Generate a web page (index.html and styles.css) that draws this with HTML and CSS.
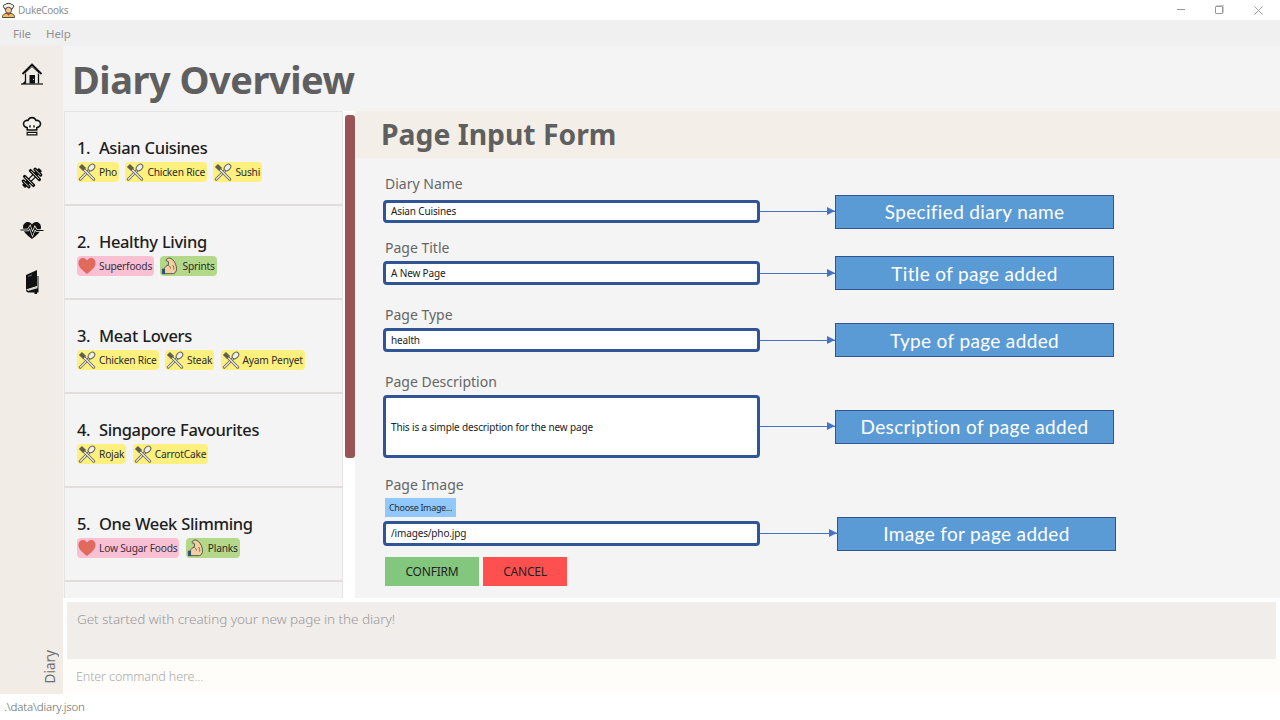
FILE: index.html
```html
<!DOCTYPE html>
<html lang="en">
<head>
<meta charset="utf-8">
<title>DukeCooks</title>
<link rel="stylesheet" href="styles.css">
</head>
<body>
<svg class="defs" width="0" height="0" aria-hidden="true">
  <symbol id="i-cutlery" viewBox="0 0 20 20">
    <path d="M2.5 18 L13 7.5" stroke="#5f5f55" stroke-width="3.2" stroke-linecap="round" fill="none"/>
    <path d="M2.5 18 L13 7.5" stroke="#efefe6" stroke-width="1.4" stroke-linecap="round" fill="none"/>
    <ellipse cx="15" cy="5" rx="3" ry="4.2" transform="rotate(45 15 5)" fill="#efefe6" stroke="#5f5f55" stroke-width="1.1"/>
    <path d="M17.5 18 L7 7.5" stroke="#5f5f55" stroke-width="3.2" stroke-linecap="round" fill="none"/>
    <path d="M17.5 18 L7 7.5" stroke="#efefe6" stroke-width="1.4" stroke-linecap="round" fill="none"/>
    <path d="M4.4 1 L9 5.6 L5.6 9 L1 4.4 Z" fill="#5f5f55"/>
  </symbol>
  <symbol id="i-heart" viewBox="0 0 20 20">
    <path d="M10 19 C5 14.5 .5 11.5 .5 6.6 C.5 3.3 3 1.2 5.5 1.2 C7.5 1.2 9 2.3 10 4 C11 2.3 12.5 1.2 14.5 1.2 C17 1.2 19.5 3.3 19.5 6.6 C19.5 11.5 15 14.5 10 19 Z" fill="#e06a5c"/>
  </symbol>
  <symbol id="i-arm" viewBox="0 0 20 20">
    <path d="M10 1 C7.500 1.200 5.500 2.400 5.500 4 L8.500 5.400 L8 9 C6 9.600 4.500 11 3.500 13 L3.500 18.500 L14 18.500 C17 17.500 17.800 14 17 10.500 C16.200 6.500 13.500 2.500 10 1 Z" fill="#f3cfa2" stroke="#4b4b42" stroke-width="1"/>
    <path d="M8 9 C9.500 10 10.500 11.500 10.500 13 M13 9 C14 10.500 14.500 12 14 14" fill="none" stroke="#4b4b42" stroke-width=".8"/>
    <rect x="1" y="13" width="3.500" height="6" fill="#35506e"/>
  </symbol>
  <symbol id="i-home" viewBox="0 0 24 24">
    <path d="M2.500 12 L12 2.500 L21.500 12" fill="none" stroke="#111" stroke-width="1.800"/>
    <path d="M5 11 L12 4.600 L19 11" fill="none" stroke="#111" stroke-width=".9"/>
    <path d="M5.500 11.500 V21.500 M18.500 11.500 V21.500" stroke="#111" stroke-width="1.300" fill="none"/>
    <rect x="9.500" y="13" width="5.500" height="8.500" fill="#111"/>
    <rect x="13" y="16.800" width="1" height="1" fill="#fff"/>
    <path d="M1 22 H23" stroke="#111" stroke-width="1.200"/>
    <path d="M2 22 L5.500 18.500 V22 Z" fill="#111"/>
  </symbol>
  <symbol id="i-hat" viewBox="-3 -2 30 30">
    <path d="M6 15 C2.500 14.500 1 12 1.500 9.500 C2 7 4.500 5.500 7 6.200 C8 3.500 10 2.500 12 2.500 C14 2.500 16 3.500 17 6.200 C19.500 5.500 22 7 22.500 9.500 C23 12 21.500 14.500 18 15 V18 H6 Z" fill="#f5f2ec" stroke="#111" stroke-width="2" stroke-linejoin="round"/>
    <path d="M9.500 12 V15 M14.500 12 V15" stroke="#111" stroke-width="1.800"/>
    <path d="M6 21 H18 V24 H6 Z" fill="#f5f2ec" stroke="#111" stroke-width="1.600"/>
  </symbol>
  <symbol id="i-gym" viewBox="-1 -1 26 26">
    <g transform="rotate(-45 12 12)">
      <rect x="-1" y="9.500" width="26" height="5" rx="1" fill="#111"/>
      <rect x="1.200" y="6" width="3.600" height="12" rx="1.600" fill="#111"/>
      <rect x="5.700" y="3.500" width="3.600" height="17" rx="1.600" fill="#111"/>
      <rect x="14.700" y="3.500" width="3.600" height="17" rx="1.600" fill="#111"/>
      <rect x="19.200" y="6" width="3.600" height="12" rx="1.600" fill="#111"/>
      <path d="M3 8 V16 M7.500 6 V18 M16.500 6 V18 M21 8 V16" stroke="#f1ede6" stroke-width=".9"/>
      <rect x="9.300" y="10.800" width="5.400" height="2.400" fill="#f1ede6"/>
    </g>
  </symbol>
  <symbol id="i-pulse" viewBox="0 0 24 24">
    <path d="M12 21 C7 17 3 14 3 9 C3 6 5.500 4 8 4 C9.800 4 11.200 5 12 6.500 C12.800 5 14.200 4 16 4 C18.500 4 21 6 21 9 C21 14 17 17 12 21 Z" fill="#111"/>
    <path d="M.5 12 H8 L10 9 L12.500 16 L15 10 L16.500 12.500 H23.500" fill="none" stroke="#f1ede6" stroke-width="2.600"/>
    <path d="M.5 12 H8 L10 9 L12.500 16 L15 10 L16.500 12.500 H23.500" fill="none" stroke="#111" stroke-width="1.200"/>
  </symbol>
  <symbol id="i-book" viewBox="0 0 24 24">
    <path d="M6 5 L17 0 V16 L6 19.500 Z" fill="#111"/>
    <path d="M6 19.500 C6 21.500 7 22.500 8.500 22.500 H18.500 V6 H17.500 V17 L7.500 20" fill="#111"/>
    <path d="M7 19.500 L17.500 16.500 V18.300 L8 21 Z" fill="#d8d4cc"/>
    <path d="M8 6.500 L12 4.900" stroke="#8a8a8a" stroke-width=".8"/>
    <rect x="14.500" y="20" width="2.500" height="4" fill="#111"/>
  </symbol>
</svg>

<header class="titlebar">
  <svg class="logo" viewBox="0 0 16 16" aria-hidden="true">
    <path d="M4 6 C1.800 5.500 2 2 4.500 2.200 C5.500 .5 10.500 .5 11.500 2.200 C14 2 14.200 5.500 12 6 V7 H4 Z" fill="#f6f1e4" stroke="#222" stroke-width="1"/>
    <circle cx="8" cy="8.300" r="3.300" fill="#f3c79a" stroke="#222" stroke-width=".8"/>
    <path d="M1.500 16 C1.500 12.500 4 11.500 8 11.500 C12 11.500 14.500 12.500 14.500 16 Z" fill="#e9c25b" stroke="#222" stroke-width=".8"/>
    <path d="M6 11.500 H10 L8 14 Z" fill="#c9302c"/>
  </svg>
  <span class="app-name">DukeCooks</span>
  <div class="window-controls">
    <span class="wc-min"></span>
    <span class="wc-max"></span>
    <svg class="wc-close" viewBox="0 0 10 10" aria-hidden="true"><path d="M.5 .5 L9.500 9.500 M9.500 .5 L.5 9.500" stroke="#999" stroke-width="1" fill="none"/></svg>
  </div>
</header>

<nav class="menubar">
  <span class="menu-item">File</span>
  <span class="menu-item">Help</span>
</nav>

<div class="workspace">
  <aside class="sidebar">
    <svg class="nav-icon"><use href="#i-home"/></svg>
    <svg class="nav-icon"><use href="#i-hat"/></svg>
    <svg class="nav-icon"><use href="#i-gym"/></svg>
    <svg class="nav-icon"><use href="#i-pulse"/></svg>
    <svg class="nav-icon"><use href="#i-book"/></svg>
    <span class="section-label">Diary</span>
  </aside>

  <main class="main">
    <section class="content">
      <h1 class="page-heading">Diary Overview</h1>
      <div class="split">
        <div class="diary-list">
          <article class="card">
            <h2 class="card-title">1.  Asian Cuisines</h2>
            <div class="tags">
              <span class="tag tag-food"><svg class="tag-icon"><use href="#i-cutlery"/></svg>Pho</span>
              <span class="tag tag-food"><svg class="tag-icon"><use href="#i-cutlery"/></svg>Chicken Rice</span>
              <span class="tag tag-food"><svg class="tag-icon"><use href="#i-cutlery"/></svg>Sushi</span>
            </div>
          </article>
          <article class="card">
            <h2 class="card-title">2.  Healthy Living</h2>
            <div class="tags">
              <span class="tag tag-health"><svg class="tag-icon"><use href="#i-heart"/></svg>Superfoods</span>
              <span class="tag tag-fit"><svg class="tag-icon"><use href="#i-arm"/></svg>Sprints</span>
            </div>
          </article>
          <article class="card">
            <h2 class="card-title">3.  Meat Lovers</h2>
            <div class="tags">
              <span class="tag tag-food"><svg class="tag-icon"><use href="#i-cutlery"/></svg>Chicken Rice</span>
              <span class="tag tag-food"><svg class="tag-icon"><use href="#i-cutlery"/></svg>Steak</span>
              <span class="tag tag-food"><svg class="tag-icon"><use href="#i-cutlery"/></svg>Ayam Penyet</span>
            </div>
          </article>
          <article class="card">
            <h2 class="card-title">4.  Singapore Favourites</h2>
            <div class="tags">
              <span class="tag tag-food"><svg class="tag-icon"><use href="#i-cutlery"/></svg>Rojak</span>
              <span class="tag tag-food"><svg class="tag-icon"><use href="#i-cutlery"/></svg>CarrotCake</span>
            </div>
          </article>
          <article class="card">
            <h2 class="card-title">5.  One Week Slimming</h2>
            <div class="tags">
              <span class="tag tag-health"><svg class="tag-icon"><use href="#i-heart"/></svg>Low Sugar Foods</span>
              <span class="tag tag-fit"><svg class="tag-icon"><use href="#i-arm"/></svg>Planks</span>
            </div>
          </article>
          <article class="card"></article>
        </div>
        <div class="scroll-track"><div class="scroll-thumb"></div></div>

        <section class="form-panel">
          <h2 class="form-heading">Page Input Form</h2>
          <div class="form-body">
            <div class="field field-name">
              <label class="field-label">Diary Name</label>
              <div class="input-line input-name">
                <span class="input-text">Asian Cuisines</span>
                <div class="callout"><span class="connector"></span><span class="callout-box">Specified diary name</span></div>
              </div>
            </div>
            <div class="field field-title">
              <label class="field-label">Page Title</label>
              <div class="input-line input-title">
                <span class="input-text">A New Page</span>
                <div class="callout"><span class="connector"></span><span class="callout-box">Title of page added</span></div>
              </div>
            </div>
            <div class="field field-type">
              <label class="field-label">Page Type</label>
              <div class="input-line input-type">
                <span class="input-text">health</span>
                <div class="callout"><span class="connector"></span><span class="callout-box">Type of page added</span></div>
              </div>
            </div>
            <div class="field field-desc">
              <label class="field-label">Page Description</label>
              <div class="input-line input-area">
                <span class="input-text">This is a simple description for the new page</span>
                <div class="callout"><span class="connector"></span><span class="callout-box">Description of page added</span></div>
              </div>
            </div>
            <div class="field field-image">
              <label class="field-label">Page Image</label>
              <button class="choose-btn">Choose Image...</button>
              <div class="input-line input-path">
                <span class="input-text">/images/pho.jpg</span>
                <div class="callout callout-wide"><span class="connector"></span><span class="callout-box">Image for page added</span></div>
              </div>
            </div>
            <div class="actions">
              <button class="btn btn-confirm">CONFIRM</button>
              <button class="btn btn-cancel">CANCEL</button>
            </div>
          </div>
        </section>
      </div>
    </section>

    <section class="console">
      <div class="result-box">Get started with creating your new page in the diary!</div>
      <div class="command-box">Enter command here...</div>
    </section>
  </main>
</div>

<footer class="statusbar">.\data\diary.json</footer>
</body>
</html>
```

FILE: styles.css
```css
* { box-sizing: border-box; }

html, body {
  margin: 0;
  width: 1280px;
  height: 720px;
  overflow: hidden;
}

body {
  display: flex;
  flex-direction: column;
  background: #fff;
  font-family: "Noto Sans", "Open Sans", sans-serif;
  color: #222;
}

.defs { position: absolute; }

/* Window chrome */
.titlebar {
  height: 20px;
  flex: none;
  display: flex;
  align-items: center;
  padding-left: 1px;
  background: #fff;
}
.logo { width: 15px; height: 16px; }
.app-name { margin-left: 2px; font-size: 10px; letter-spacing: -.3px; color: #8f8f8f; }
.window-controls {
  margin-left: auto;
  display: flex;
  align-items: center;
  width: 103px;
  height: 20px;
  gap: 30px;
}
.wc-min { width: 8px; height: 1px; background: #999; margin-top: -1px; }
.wc-max { width: 8px; height: 8px; border: 1px solid #999; border-radius: 1px; box-shadow: 1px -1px 0 #ccc; }
.wc-close { width: 9px; height: 9px; margin-left: 1px; }

.menubar {
  height: 26px;
  flex: none;
  display: flex;
  align-items: center;
  gap: 15px;
  padding-left: 13px;
  background: #f0f0f0;
  font-size: 11.5px;
  letter-spacing: -.1px;
  color: #909090;
}

.workspace {
  height: 648px;
  flex: none;
  display: grid;
  grid-template-columns: 63px 1fr;
}

/* Left navigation */
.sidebar {
  display: flex;
  flex-direction: column;
  align-items: center;
  padding: 2px 0 11px;
  background: #f1ede6;
}
.nav-icon {
  width: 24px;
  height: 24px;
  flex: none;
  margin: 14px 0;
}
.section-label {
  margin-top: auto;
  align-self: flex-end;
  margin-right: 5px;
  writing-mode: vertical-rl;
  transform: rotate(180deg);
  font-size: 13.5px;
  line-height: 15px;
  color: #6f6f6f;
}

.main {
  display: flex;
  flex-direction: column;
  min-width: 0;
}

.content {
  height: 552px;
  flex: none;
  display: flex;
  flex-direction: column;
  background: #f4f4f4;
}

.page-heading {
  margin: 0;
  height: 65px;
  flex: none;
  padding-left: 9px;
  font-size: 38px;
  line-height: 67px;
  font-weight: 700;
  letter-spacing: -.5px;
  color: #5f5f5f;
  white-space: nowrap;
}

.split {
  flex: 1;
  display: flex;
  min-height: 0;
}

/* Diary list */
.diary-list {
  width: 280px;
  flex: none;
  overflow: hidden;
  padding: 0 0 0 1px;
}
.card {
  height: 94px;
  padding: 25px 0 0 12px;
  border: 1px solid #e6e3e3;
  border-bottom: 2px solid #e2dddd;
  border-top-width: 0;
  background: #f4f4f4;
}
.card:first-child {
  height: 95px;
  border-top: 1px solid #e6e3e3;
}
.card-title {
  margin: 0;
  font-size: 16.5px;
  line-height: 22px;
  font-weight: 500;
  letter-spacing: -.35px;
  word-spacing: .4px;
  color: #1d1d1d;
  white-space: pre;
}
.tags {
  display: flex;
  gap: 6.4px;
  margin-top: 3px;
}
.tag {
  height: 20px;
  display: flex;
  align-items: center;
  gap: 3px;
  padding: 0 2px 0 1px;
  border-radius: 4px;
  font-size: 10.2px;
  letter-spacing: -.2px;
  color: #2b2b2b;
  white-space: nowrap;
}
.tag-icon { width: 18px; height: 18px; flex: none; }
.tag-food { background: #fdf07e; }
.tag-health { background: #f9c0d4; color: #3a2f40; }
.tag-fit { background: #b4d88a; }

.scroll-track {
  width: 12px;
  flex: none;
  padding: 4px 0 0 2px;
  background: #fff;
}
.scroll-thumb {
  width: 10px;
  height: 343px;
  border-radius: 3px;
  background: #995556;
}

/* Form */
.form-panel {
  flex: 1;
  min-width: 0;
  margin-left: 1px;
}
.form-heading {
  margin: 0;
  height: 47px;
  padding-left: 25px;
  background: #f3efe8;
  font-size: 28.3px;
  line-height: 46px;
  font-weight: 700;
  color: #5f5f5f;
}
.form-body {
  display: flex;
  flex-direction: column;
  padding: 16px 0 0 28px;
}
.field-label {
  display: block;
  height: 20px;
  padding-left: 1px;
  font-size: 14px;
  line-height: 20px;
  color: #666;
}
.input-line {
  position: relative;
  width: 377px;
  margin-left: -1px;
  display: flex;
  align-items: center;
  padding-left: 5px;
  background: #fff;
  border: 3px solid #2f5597;
  border-radius: 4px;
}
.input-name { height: 23px; margin-top: 6px; padding-bottom: 1px; }
.input-title { height: 24px; margin-top: 3px; }
.input-type { height: 24px; margin-top: 3px; }
.input-area { height: 63px; margin-top: 3px; }
.input-path { height: 25px; margin-top: 4px; padding-bottom: 1px; }
.input-text { font-size: 10px; letter-spacing: -.15px; color: #222; white-space: nowrap; }

.field-title { margin-top: 15px; }
.field-type { margin-top: 20px; }
.field-desc { margin-top: 20px; }
.field-image { margin-top: 17px; }

/* Annotation callouts laid over the form */
.callout {
  position: absolute;
  left: 100%;
  top: 50%;
  transform: translateY(-50%);
  display: flex;
  align-items: center;
  white-space: nowrap;
}
.connector {
  position: relative;
  width: 75px;
  height: 1px;
  margin-left: 3px;
  background: #4472c4;
}
.connector::after {
  content: "";
  position: absolute;
  right: 0;
  top: -4px;
  border-left: 8px solid #4472c4;
  border-top: 4.5px solid transparent;
  border-bottom: 4.5px solid transparent;
}
.callout-wide .connector { width: 77px; }
.callout-box {
  width: 279px;
  height: 34px;
  display: flex;
  align-items: center;
  justify-content: center;
  background: #5b9bd5;
  border: 1px solid #2f5597;
  font-family: "Lato", "Noto Sans", sans-serif;
  font-size: 19px;
  letter-spacing: .35px;
  color: #fff;
}

.choose-btn {
  display: block;
  width: 71px;
  height: 19px;
  margin: 3px 0 0 1px;
  padding: 0;
  border: 0;
  background: #90c8fb;
  font-family: inherit;
  font-size: 9px;
  letter-spacing: -.35px;
  color: #25303a;
  white-space: nowrap;
}

.actions {
  display: flex;
  gap: 4px;
  margin: 11px 0 0 1px;
}
.btn {
  height: 29px;
  padding: 0;
  border: 0;
  font-family: inherit;
  font-size: 12px;
  letter-spacing: -.2px;
  color: #222;
}
.btn-confirm { width: 94px; background: #83c77f; }
.btn-cancel { width: 84px; background: #ff5050; }

/* Console */
.console {
  flex: 1;
  display: flex;
  flex-direction: column;
  padding-top: 4px;
  background: #fff;
}
.result-box {
  height: 57px;
  margin: 0 4px;
  padding: 7px 10px;
  background: #f1edea;
  font-size: 13.5px;
  font-weight: 300;
  line-height: 21px;
  letter-spacing: -.06px;
  color: #9a9a9a;
}
.command-box {
  flex: 1;
  padding-left: 13px;
  background: #fffdf9;
  font-size: 12.5px;
  font-weight: 300;
  line-height: 35px;
  letter-spacing: -.1px;
  color: #aaa;
}

.statusbar {
  flex: 1;
  padding-left: 4px;
  font-size: 11.5px;
  font-weight: 300;
  line-height: 25px;
  letter-spacing: -.17px;
  color: #666;
  background: #fff;
}
```
